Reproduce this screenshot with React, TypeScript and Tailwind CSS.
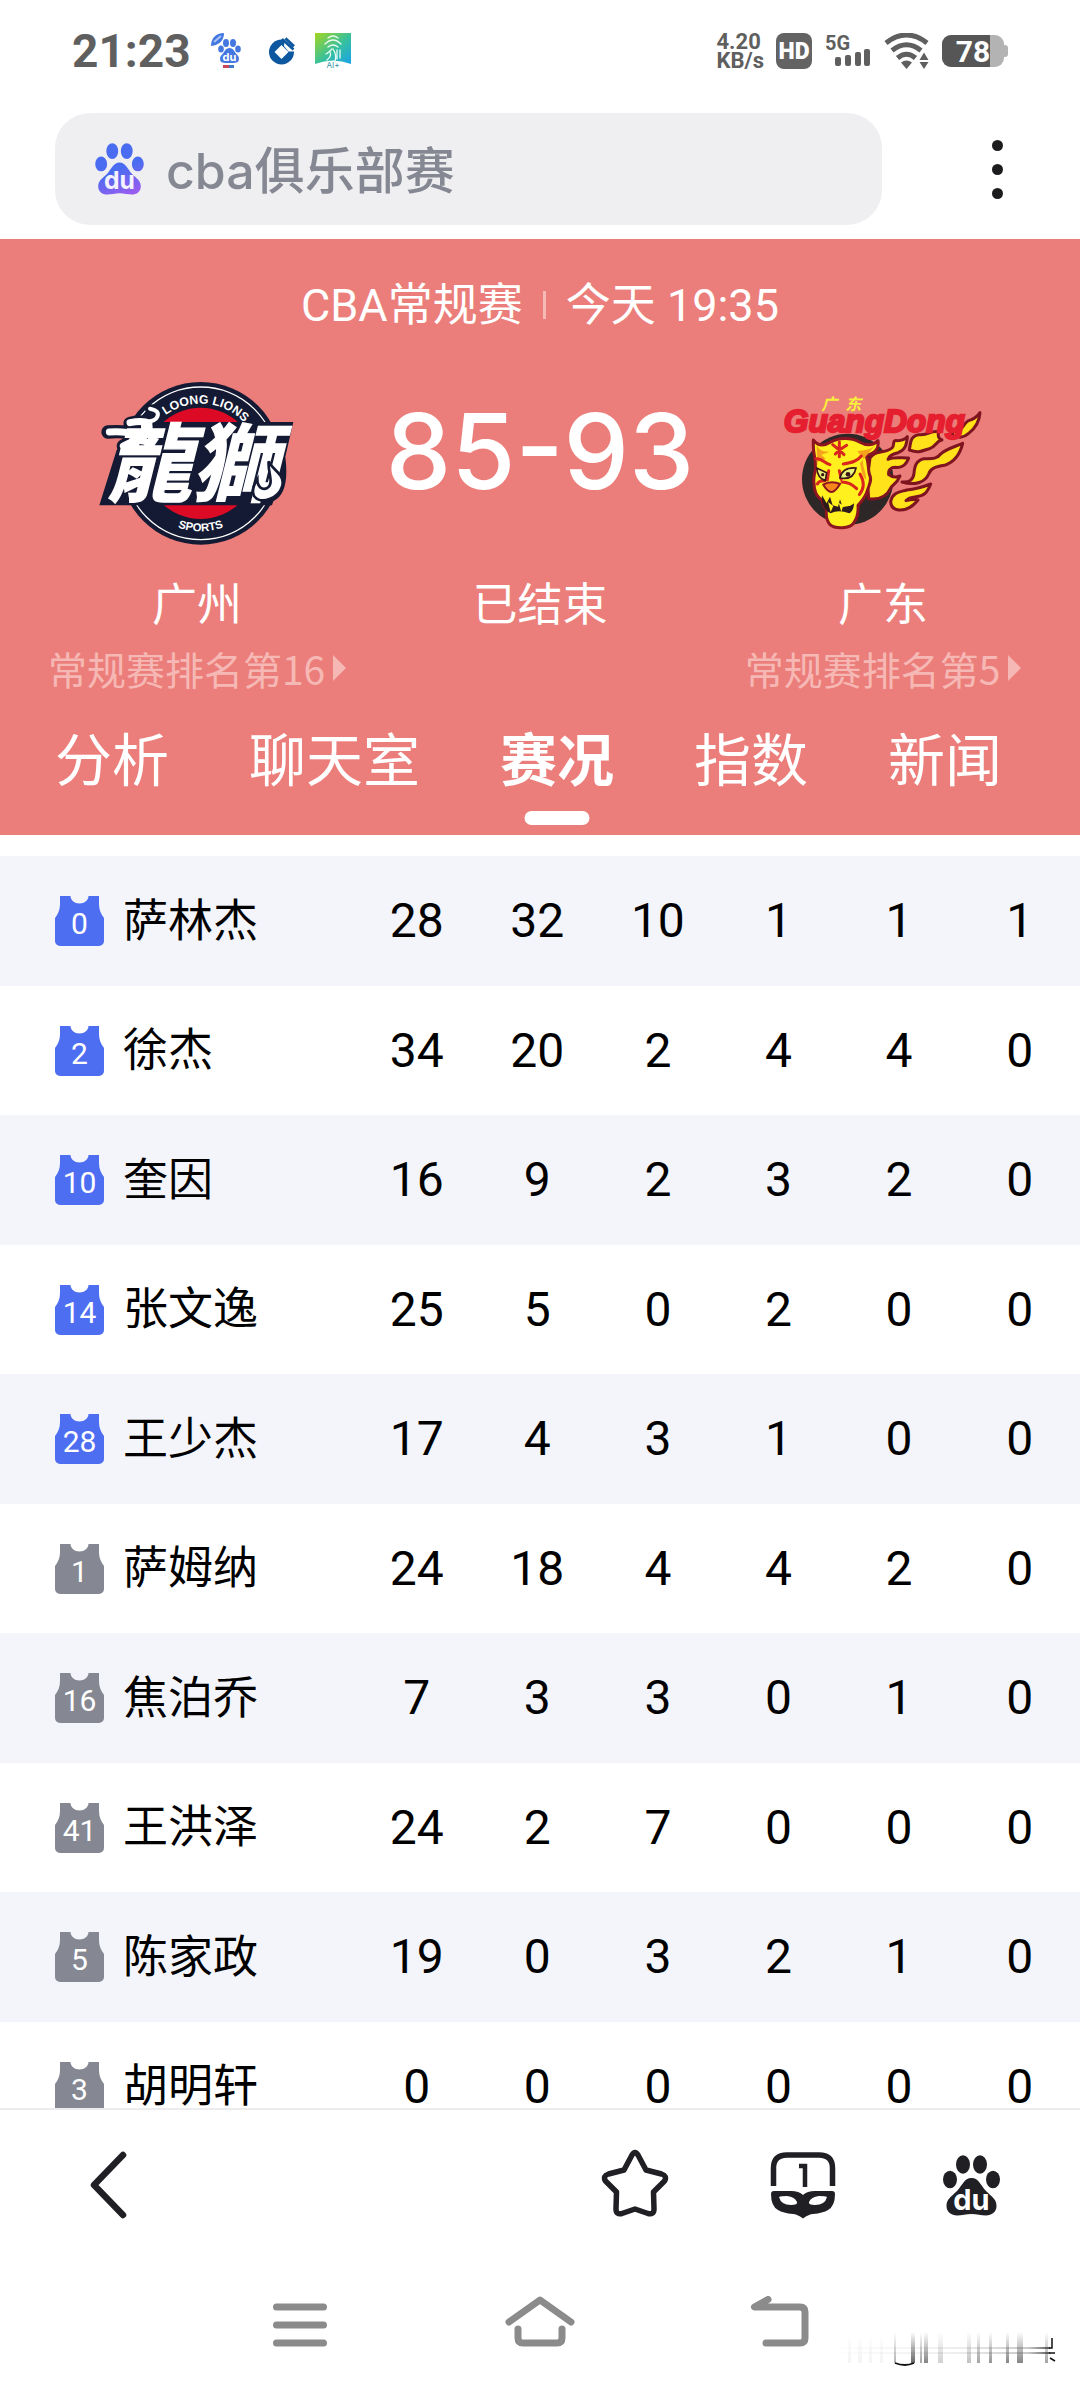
import React from "react";

type Player = { no: number; name: string; starter: boolean; stats: number[] };

const players: Player[] = [
  { no: 0, name: "萨林杰", starter: true, stats: [28, 32, 10, 1, 1, 1] },
  { no: 2, name: "徐杰", starter: true, stats: [34, 20, 2, 4, 4, 0] },
  { no: 10, name: "奎因", starter: true, stats: [16, 9, 2, 3, 2, 0] },
  { no: 14, name: "张文逸", starter: true, stats: [25, 5, 0, 2, 0, 0] },
  { no: 28, name: "王少杰", starter: true, stats: [17, 4, 3, 1, 0, 0] },
  { no: 1, name: "萨姆纳", starter: false, stats: [24, 18, 4, 4, 2, 0] },
  { no: 16, name: "焦泊乔", starter: false, stats: [7, 3, 3, 0, 1, 0] },
  { no: 41, name: "王洪泽", starter: false, stats: [24, 2, 7, 0, 0, 0] },
  { no: 5, name: "陈家政", starter: false, stats: [19, 0, 3, 2, 1, 0] },
  { no: 3, name: "胡明轩", starter: false, stats: [0, 0, 0, 0, 0, 0] },
];

const tabs = ["分析", "聊天室", "赛况", "指数", "新闻"];

function Paw({ className, fill, ink }: { className: string; fill: string; ink: string }) {
  return (
    <svg className={className} viewBox="0 0 57 61" aria-hidden="true">
      <defs>
        <linearGradient id="pawFill" gradientUnits="userSpaceOnUse" x1="20" y1="10" x2="40" y2="61">
          <stop offset="0.4" stopColor="#4a6cf0" />
          <stop offset="1" stopColor="#9a5cf0" />
        </linearGradient>
      </defs>
      <g fill={fill}>
        <ellipse cx="7" cy="24.500" rx="7" ry="8.700" />
        <ellipse cx="20" cy="9.500" rx="7" ry="9.200" />
        <ellipse cx="37" cy="9.500" rx="7" ry="9.200" />
        <ellipse cx="50" cy="24.500" rx="7" ry="8.700" />
        <path d="M28.500 23C36 23 38 31 43 36c6 6 10.500 8 10.500 15 0 6-5 9.500-10.500 9.500-5 0-9-1.500-14.500-1.500S19 60.500 14 60.500C8.500 60.500 3.500 57 3.500 51c0-7 4.500-9 10.500-15 5-5 7-13 14.500-13z" />
      </g>
      <text x="28.500" y="54.500" textAnchor="middle" fontSize="29" fontWeight="700" fontFamily="Inter, sans-serif" fill={ink}>
        du
      </text>
    </svg>
  );
}

function StatusBar() {
  return (
    <header className="flex h-[113px] shrink-0 items-center justify-between px-[72px] pb-[11px] text-[#5f5f5f]">
      <div className="flex items-center">
        <span className="text-[46px] font-bold leading-none">21:23</span>
        <svg className="ml-5 h-9 w-[30px]" viewBox="0 0 30 36" aria-hidden="true">
          <g fill="#4478e0">
            <path d="M0 13C0 4 6 0 13 0c0 7-4 12-13 13z" />
            <ellipse cx="10" cy="16" rx="2.800" ry="3.600" />
            <ellipse cx="15" cy="10" rx="3" ry="4" />
            <ellipse cx="22" cy="10" rx="3" ry="4" />
            <ellipse cx="27" cy="16" rx="2.800" ry="3.600" />
            <path d="M18.500 15c4 0 5 4 7 6 2.500 2.500 3 4 2 7-1 2-5 2-9 2s-8 0-9-2c-1-3-.5-4.500 2-7 2-2 3-6 7-6z" />
          </g>
          <path d="M3 9l7-6" stroke="#a9c3f5" strokeWidth="2" />
          <text x="18.500" y="28" textAnchor="middle" fontSize="11" fontWeight="700" fontFamily="Inter, sans-serif" fill="#fff">
            du
          </text>
          <path d="M12 33.500h6" stroke="#c8465a" strokeWidth="3" />
          <path d="M18 33.500h5" stroke="#4478c8" strokeWidth="3" />
        </svg>
        <svg className="ml-7 h-7 w-[26px]" viewBox="0 0 26 28" aria-hidden="true">
          <circle cx="12.500" cy="15" r="12.500" fill="#0c57a0" />
          <path d="M12.500 8l7 7-7 7-7-7z" fill="#fff" />
          <path d="M15 9l4.500 5.500H26V9.500L16 0z" fill="#fff" />
          <path d="M13 2l11.500 10.500M16.500 1.200l8.500 8" stroke="#0c57a0" strokeWidth="2.600" />
        </svg>
        <svg className="ml-5 h-9 w-9" viewBox="0 0 36 36" aria-hidden="true">
          <defs>
            <linearGradient id="aiTile" x1="0" y1="0" x2="1" y2="1">
              <stop offset="0" stopColor="#a4d61e" />
              <stop offset="0.55" stopColor="#35c0a0" />
              <stop offset="1" stopColor="#1aa3e8" />
            </linearGradient>
          </defs>
          <path d="M0 0h36v31q-18-7-36 0z" fill="url(#aiTile)" />
          <g fill="none" stroke="#e9fbf3" strokeWidth="1.300" strokeLinecap="round">
            <path d="M13 5q5-4 10 0M10 11q8-8 16 0M13 14q5-4 10 0M17 16q-4 4-6 5M18 16q4 6 2 12M15 19q2 4-3 8M22 17v9M25 17v8" />
          </g>
          <text x="18" y="35" textAnchor="middle" fontSize="8" fontFamily="Inter, sans-serif" fill="#2b90a8">
            AI+
          </text>
        </svg>
      </div>
      <div className="flex items-center">
        <div className="flex flex-col text-[22px] font-bold leading-[19px]">
          <span>4.20</span>
          <span>KB/s</span>
        </div>
        <span className="ml-3 flex h-9 w-9 items-center justify-center rounded-lg bg-[#636363] text-[23px] font-black leading-none text-white">HD</span>
        <svg className="ml-3 h-9 w-12" viewBox="0 0 48 36" fill="currentColor" aria-hidden="true">
          <text x="1" y="17" fontSize="20" fontWeight="700" fontFamily="Roboto, sans-serif">
            5G
          </text>
          <rect x="11" y="24" width="6" height="9" rx="2" />
          <rect x="21" y="22" width="6" height="11" rx="2" />
          <rect x="31" y="19" width="6" height="14" rx="2" />
          <rect x="40" y="16" width="6" height="17" rx="2" />
        </svg>
        <svg className="ml-3 h-9 w-[46px]" viewBox="0 0 46 36" fill="none" stroke="currentColor" aria-hidden="true">
          <path d="M2 10Q22.500-6 43 10" strokeWidth="5" />
          <path d="M8 17.500q14.500-11.500 29 0" strokeWidth="5" />
          <path d="M13.500 25q9-7.500 18 0" strokeWidth="5" />
          <path d="M17 29.500q5.500-4 11 0L22.500 36z" fill="currentColor" stroke="none" />
          <path d="M35.500 27l4.500-7.500 4.500 7.500zM35.500 29h9L40 36z" fill="currentColor" stroke="none" />
        </svg>
        <svg className="ml-3 h-9 w-[66px]" viewBox="0 0 66 36" aria-hidden="true">
          <rect x="0" y="2" width="62" height="32" rx="9" fill="#b3b3b3" />
          <rect x="60" y="12" width="6" height="12" rx="3" fill="#b3b3b3" />
          <path d="M9 2h39v32H9a9 9 0 0 1-9-9V11a9 9 0 0 1 9-9z" fill="#565656" />
          <text x="31" y="29" textAnchor="middle" fontSize="30" fontWeight="700" fontFamily="Roboto, sans-serif" fill="#fff">
            78
          </text>
        </svg>
      </div>
    </header>
  );
}

function SearchBar() {
  return (
    <div className="flex shrink-0 items-center justify-between pb-[14px] pl-[55px] pr-[60px]">
      <label className="flex h-28 w-[827px] items-center rounded-[35px] bg-[#efeff2] pl-10">
        <Paw className="h-[52px] w-[49px] shrink-0" fill="url(#pawFill)" ink="#f4f2ff" />
        <input
          type="text"
          aria-label="搜索"
          defaultValue="cba俱乐部赛"
          className="ml-[22px] w-full bg-transparent pt-1 font-['Inter','Noto_Sans_CJK_SC',sans-serif] text-[50px] font-medium text-[#858892] outline-none"
        />
      </label>
      <button type="button" aria-label="更多" className="flex h-28 w-[46px] flex-col items-center justify-center gap-[13px]">
        <span className="size-[11px] rounded-full bg-[#1c1c1f]" />
        <span className="size-[11px] rounded-full bg-[#1c1c1f]" />
        <span className="size-[11px] rounded-full bg-[#1c1c1f]" />
      </button>
    </div>
  );
}

function LoongLionsLogo() {
  return (
    <svg className="h-[166px] w-[198px]" viewBox="54 60 594 498" role="img" aria-label="Loong Lions Sports">
      <defs>
        <path id="archTop" d="M183 310a179 179 0 0 1 358 0" />
        <path id="archBottom" d="M158 310a204 204 0 0 0 408 0" />
      </defs>
      <circle cx="362" cy="310" r="244" fill="#141a33" />
      <circle cx="362" cy="310" r="229" fill="none" stroke="#fff" strokeWidth="4" />
      <circle cx="362" cy="310" r="167" fill="#dc0a24" />
      <g fill="#fff" fontFamily="Liberation Sans, sans-serif" fontWeight="700" textAnchor="middle">
        <text fontSize="37">
          <textPath href="#archTop" startOffset="53%">
            LOONG LIONS
          </textPath>
        </text>
        <text fontSize="34">
          <textPath href="#archBottom" startOffset="50%">
            SPORTS
          </textPath>
        </text>
      </g>
      <path d="M170 186H640L616 290Q630 400 580 424L576 436H58L110 270z" fill="#141a33" />
      <g fill="none" stroke="#141a33" strokeWidth="40" strokeLinecap="round">
        <path d="M84 216q40-4 90 4M150 190q30-8 56 0M130 258q50-30 90-10" />
        <path d="M208 146q34 4 24 26" strokeWidth="28" />
      </g>
      <text
        x="336"
        y="404"
        textAnchor="middle"
        fontSize="256"
        fontStyle="italic"
        fontWeight="700"
        fontFamily="Noto Sans CJK TC, sans-serif"
        fill="#fff"
        stroke="#fff"
        strokeWidth="4"
      >
        龍獅
      </text>
      <g fill="none" stroke="#fff" strokeWidth="21" strokeLinecap="round">
        <path d="M88 216q40-4 90 8M150 188q40-8 56 2M130 258q50-30 80-6" />
        <path d="M210 146q30 6 22 24q-8 18-44 14" strokeWidth="12" />
        <path d="M196 226q30 4 42-12" strokeWidth="12" />
      </g>
      <path d="M566 304c10 26 52 40 40 76-10 34-62 56-84 28-10-22 4-40 10-50 0 22 14 34 30 26 22-14 0-50 4-80z" fill="#fff" stroke="#141a33" strokeWidth="8" />
    </svg>
  );
}

function GuangdongLogo() {
  return (
    <svg className="h-[134px] w-[198px]" viewBox="72 76 594 402" role="img" aria-label="广东 GuangDong">
      <circle cx="263" cy="326" r="137" fill="#2d2727" />
      <g fill="#ffe21a" stroke="#7d1420" strokeWidth="9" strokeLinejoin="round">
        <path d="M330 262c16-26 46-12 66-30 10-10-2-24 16-22 12 0 22-2 30-12-2 26-8 42-28 48-18 4-28 12-30 20 18-8 38-4 62-4-8 24-26 30-40 28-14 0-22 8-20 22 10 8 24 8 34 4-10 24-22 26-28 36-10 22-30 36-66 32l-4-60z" />
        <path d="M448 238c4-24 4-44 30-46 26 4 38-16 58-8-4 14 0 20 10 24-18 2-18 22-38 26-18 4-28 16-60 4z" />
        <path d="M580 182c24 8 30-26 46-32 14-4 26-12 34-24-2 30-18 50-34 62-16 14-28 14-50 6z" />
        <path d="M426 334c20 2 34-6 36-26 2-24 8-40 30-44 24 0 38 2 50-14 14-14 38-20 66-32-8 34-26 56-54 66-26 4-42 8-48 26-10 24-40 36-80 24z" />
        <path d="M392 392c6-28 28-28 48-34 24-2 36-4 72-18-10 26-20 36-44 38-18 2-24 4-30 12 16-4 26-6 36-2-16 20-34 32-58 30-16-2-24-10-24-26z" />
      </g>
      <path
        d="M160 208c14 18 32 18 48 8 30-16 64-16 90-2 18 10 38 14 56-4 4 24-10 40-36 44 8 20 6 40 10 56 10 20-2 34-6 50-6 22-20 34-28 44 2 26-6 44-14 54-10 16-54 18-70 4-12-14-12-34-10-46-12-10-10-20-14-28-18-10-24-30-24-50-4-20 6-34 4-52 2-24-8-30-6-78z"
        fill="#fff01e"
        stroke="#8d1520"
        strokeWidth="9"
        strokeLinejoin="round"
      />
      <path d="M170 222c10 26 30 18 38 22l-24 8 14 14c-20-2-26 6-26 20zM352 216c-20 28-46 20-60 26l18 20c-6 24 10 40 8 66-12-14-14-30-18-50z" fill="#f5a21c" />
      <g fill="none" stroke="#d9261c" strokeWidth="9" strokeLinecap="round" strokeLinejoin="round">
        <path d="M238 214v44M218 222l20 16 22-14M226 250l12-12 14 14" />
        <path d="M168 264c18-2 26 14 42 18M304 256c-12 16-30 20-54 24" />
        <path d="M206 300l-4 28M238 300l6 26M172 340c8-14 14-6 22-10M300 310c12 20 16 40-2 62M246 334c20 0 34 10 44 20" />
      </g>
      <path d="M170 292l30 14-4 24c-14-4-24-16-26-38zM240 322c4-20 18-32 48-30-4 20-16 36-48 30z" fill="#e8f27a" stroke="#3c1418" strokeWidth="5" />
      <circle cx="264" cy="311" r="7" fill="#3c1418" />
      <circle cx="188" cy="312" r="5" fill="#3c1418" />
      <path d="M190 342c14-10 38-8 50-2-6 10-14 22-24 24-14 0-20-12-26-22z" fill="#f5871c" stroke="#8d1520" strokeWidth="6" />
      <path d="M186 374l14 24 10-20 8 26 16 4 6-22 8 24c16-4 24-2 34-12 0 14-6 26-14 30-22-8-40-8-56 0-22-12-28-32-26-54z" fill="#2d1a1c" />
      <path d="M204 394l8 30 8-18zM236 396l8 28 6-20z" fill="#fff01e" />
      <text y="119" fontSize="48" fontStyle="italic" fontWeight="700" fontFamily="Noto Sans CJK SC, sans-serif" fill="#f8ee3c">
        <tspan x="184">广</tspan>
        <tspan x="256">东</tspan>
      </text>
      <text x="343" y="184" textAnchor="middle" fontSize="95" fontStyle="italic" fontWeight="700" fontFamily="Liberation Sans, sans-serif" fill="#e51f2f" stroke="#e51f2f" strokeWidth="7">
        GuangDong
      </text>
    </svg>
  );
}

function TeamName({ children }: { children: React.ReactNode }) {
  return <p className="flex h-[88px] items-center justify-center pt-1 text-[45px] leading-none">{children}</p>;
}

function Rank({ children }: { children: React.ReactNode }) {
  return (
    <a
      href="#rank"
      className="flex h-[46px] items-center justify-center gap-2 whitespace-nowrap pb-1 font-['Noto_Sans_CJK_SC',sans-serif] text-[39px] leading-none text-[#f6b8b5]"
    >
      {children}
      <svg className="h-[26px] w-[13px]" viewBox="0 0 13 26" fill="currentColor" aria-hidden="true">
        <path d="M0 0l13 13L0 26z" />
      </svg>
    </a>
  );
}

function Scoreboard() {
  return (
    <section className="shrink-0 bg-[#eb7e7a] text-white">
      <h1 className="flex h-32 items-center justify-center whitespace-nowrap pt-1 text-[45px] leading-none">
        <span>CBA常规赛</span>
        <span className="mx-5 h-7 w-[3px] bg-[#f5b9b6]" />
        <span>今天 19:35</span>
      </h1>
      <div className="grid grid-cols-[27fr_20fr_27fr]">
        <div className="min-w-0">
          <div className="flex h-48 items-center justify-center">
            <LoongLionsLogo />
          </div>
          <TeamName>广州</TeamName>
          <Rank>常规赛排名第16</Rank>
        </div>
        <div className="min-w-0">
          <p className="flex h-48 items-center justify-center whitespace-nowrap pb-6 font-['Inter',sans-serif] text-[104px] font-medium leading-none">85-93</p>
          <TeamName>已结束</TeamName>
        </div>
        <div className="min-w-0">
          <div className="flex h-48 items-center justify-center">
            <GuangdongLogo />
          </div>
          <TeamName>广东</TeamName>
          <Rank>常规赛排名第5</Rank>
        </div>
      </div>
      <nav className="flex h-[142px] gap-20 whitespace-nowrap pl-[55px]">
        {tabs.map((t) => {
          const active = t === "赛况";
          return (
            <button
              key={t}
              type="button"
              aria-current={active ? "page" : undefined}
              className={active ? "relative h-[132px] pt-1 text-[57px] font-bold leading-none" : "h-[132px] pt-1 text-[57px] leading-none"}
            >
              {t}
              {active && <span className="absolute bottom-0 left-1/2 h-[14px] w-[65px] -translate-x-1/2 rounded-full bg-white" />}
            </button>
          );
        })}
      </nav>
    </section>
  );
}

function Jersey({ no, starter }: { no: number; starter: boolean }) {
  return (
    <span className="relative flex h-[50px] w-[49px] items-center justify-center pt-[6px] text-[30px] leading-none text-white">
      <svg className={starter ? "absolute inset-0 text-[#4e6ef2]" : "absolute inset-0 text-[#858892]"} viewBox="0 0 49 50" fill="currentColor" aria-hidden="true">
        <path d="M5 0h10.500c0 4 4 7.500 9 7.500s9-3.500 9-7.500H44v8c0 6 2 10 5 14v23a5 5 0 0 1-5 5H5a5 5 0 0 1-5-5V22c3-4 5-8 5-14z" />
      </svg>
      <span className="relative">{no}</span>
    </span>
  );
}

function PlayerTable() {
  return (
    <main className="min-h-0 flex-1 overflow-hidden pt-[21px]">
      <table className="w-full table-fixed border-collapse text-black">
        <colgroup>
          <col className="w-[33%]" />
        </colgroup>
        <tbody>
          {players.map((p) => (
            <tr key={p.no} className="h-[129px] odd:h-[130px] odd:bg-[#f4f5fa]">
              <th scope="row" className="p-0 pl-[55px] text-left font-normal">
                <div className="flex items-center gap-[19px] whitespace-nowrap text-[45px] leading-none">
                  <Jersey no={p.no} starter={p.starter} />
                  {p.name}
                </div>
              </th>
              {p.stats.map((s, i) => (
                <td key={i} className="p-0 text-center text-[48px] leading-none">
                  {s}
                </td>
              ))}
            </tr>
          ))}
        </tbody>
      </table>
    </main>
  );
}

function Toolbar() {
  return (
    <footer className="flex h-[152px] shrink-0 items-center justify-between border-t-2 border-[#ececee] bg-white px-[73px] text-[#1f1f24]">
      <button type="button" aria-label="后退" className="w-[72px]">
        <svg className="h-[72px] w-[72px]" viewBox="0 0 72 72" fill="none" stroke="currentColor" strokeWidth="6.500" strokeLinecap="round" strokeLinejoin="round" aria-hidden="true">
          <path d="M50 6L21 36l29 30" />
        </svg>
      </button>
      <div className="flex gap-24">
        <button type="button" aria-label="收藏" className="w-[72px]">
          <svg className="h-[72px] w-[72px]" viewBox="0 0 72 72" fill="none" stroke="currentColor" strokeWidth="5.500" strokeLinejoin="round" aria-hidden="true">
            <path d="M33 6q3-5 6 0l8 15 15.500 4q6 2 3 7L54.500 43l.5 17q0 6-6 4.500L36 60l-13 4.500q-6 1.500-6-4.500l.5-17L6.500 32q-3-5 3-7L25 21z" />
          </svg>
        </button>
        <button type="button" aria-label="无痕窗口 1" className="w-[72px]">
          <svg className="h-[72px] w-[72px]" viewBox="0 0 72 72" aria-hidden="true">
            <path d="M6.500 37V19Q6.500 6 20 6h32q13.500 0 13.500 13v18" fill="none" stroke="currentColor" strokeWidth="5.500" />
            <path d="M32 17h6v21" fill="none" stroke="currentColor" strokeWidth="4.500" />
            <path
              fill="currentColor"
              fillRule="evenodd"
              d="M7 42h17q8 0 12 4 4-4 12-4h17q3 0 3 3 0 12-7 16-5 3-15 4-4 0-10 4.500Q30 65 26 65q-10-1-15-4-7-4-7-16 0-3 3-3zM12 48q2 8 12 8 7 0 6-3-2-5-10-6-6 0-8 1zm48 0q-2 8-12 8-7 0-6-3 2-5 10-6 6 0 8 1z"
            />
          </svg>
        </button>
        <button type="button" aria-label="百度首页" className="flex w-[72px] items-center justify-center">
          <Paw className="h-[61px] w-[57px]" fill="currentColor" ink="#fff" />
        </button>
      </div>
    </footer>
  );
}

function SystemNav() {
  return (
    <nav className="relative flex h-32 shrink-0 items-center justify-center gap-[168px] bg-white pt-1 text-[#8b8b8b]">
      <button type="button" aria-label="最近任务" className="w-[72px]">
        <svg className="h-[60px] w-[72px]" viewBox="0 0 72 60" stroke="currentColor" strokeWidth="7" strokeLinecap="round" aria-hidden="true">
          <path d="M12.500 11h47M12.500 29h47M12.500 47h47" />
        </svg>
      </button>
      <button type="button" aria-label="主屏幕" className="w-[72px]">
        <svg className="h-[60px] w-[72px]" viewBox="0 0 72 60" fill="none" stroke="currentColor" strokeWidth="7" strokeLinecap="round" strokeLinejoin="round" aria-hidden="true">
          <path d="M5 26L36 4l31 22M14 33v9q0 5 5 5h34q5 0 5-5v-9" />
        </svg>
      </button>
      <button type="button" aria-label="返回" className="w-[72px]">
        <svg className="h-[60px] w-[72px]" viewBox="0 0 72 60" fill="none" stroke="currentColor" strokeWidth="7" strokeLinecap="round" strokeLinejoin="round" aria-hidden="true">
          <path d="M24 3.500L10.500 11H56q5 0 5 5v26q0 5-5 5H22" />
        </svg>
      </button>
      <svg className="absolute bottom-2 right-5 h-[60px] w-60" viewBox="0 0 240 60" aria-hidden="true">
        <defs>
          <linearGradient id="fadeDown" x1="0" y1="12" x2="0" y2="43" gradientUnits="userSpaceOnUse">
            <stop offset="0" stopColor="#555" stopOpacity="0" />
            <stop offset="1" stopColor="#555" stopOpacity="0.9" />
          </linearGradient>
          <linearGradient id="fadeRight" x1="10" y1="0" x2="230" y2="0" gradientUnits="userSpaceOnUse">
            <stop offset="0" stopColor="#666" stopOpacity="0" />
            <stop offset="0.6" stopColor="#666" stopOpacity="0.12" />
            <stop offset="0.9" stopColor="#666" stopOpacity="0.35" />
            <stop offset="1" stopColor="#444" stopOpacity="0.9" />
          </linearGradient>
        </defs>
        <g fill="url(#fadeDown)">
          <rect x="74" y="12" width="2" height="31" opacity="0.5" />
          <rect x="91" y="12" width="4" height="31" />
          <rect x="100" y="12" width="2" height="31" opacity="0.6" />
          <rect x="104" y="12" width="4" height="31" opacity="0.8" />
          <rect x="118" y="12" width="5" height="31" opacity="0.3" />
          <rect x="147" y="12" width="4" height="31" opacity="0.4" />
          <rect x="157" y="12" width="3" height="31" opacity="0.6" />
          <rect x="169" y="12" width="3" height="31" opacity="0.7" />
          <rect x="186" y="12" width="3" height="31" opacity="0.8" />
          <rect x="197" y="12" width="6" height="31" opacity="0.8" />
          <rect x="225" y="12" width="3" height="31" opacity="0.6" />
          <rect x="28" y="18" width="3" height="25" opacity="0.07" />
          <rect x="38" y="18" width="4" height="25" opacity="0.07" />
          <rect x="49" y="18" width="3" height="25" opacity="0.07" />
          <rect x="60" y="18" width="3" height="25" opacity="0.07" />
        </g>
        <rect x="10" y="27" width="220" height="2" fill="url(#fadeRight)" />
        <rect x="10" y="32" width="220" height="2" fill="url(#fadeRight)" />
        <path d="M75 43q10 4 19 0" fill="none" stroke="#111" strokeWidth="1.800" />
        <path d="M232 18v10h-3M229 33h6M230 38l5 3" fill="none" stroke="#111" strokeWidth="1.500" />
      </svg>
    </nav>
  );
}

export default function App() {
  return (
    <div className="flex h-screen flex-col overflow-hidden bg-white font-['Roboto','Noto_Sans_CJK_SC',sans-serif]">
      <StatusBar />
      <SearchBar />
      <Scoreboard />
      <PlayerTable />
      <Toolbar />
      <SystemNav />
    </div>
  );
}
